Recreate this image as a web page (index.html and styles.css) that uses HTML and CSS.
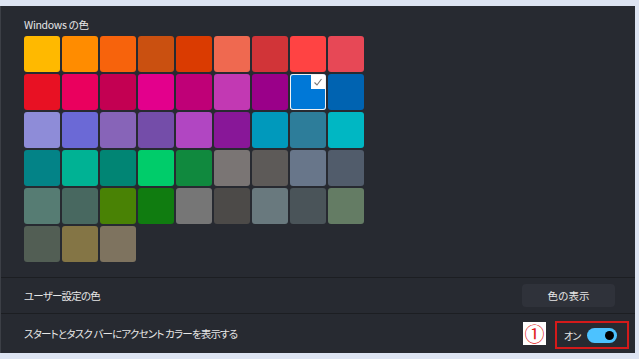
FILE: index.html
```html
<!DOCTYPE html>
<html lang="ja">
<head>
    <meta charset="UTF-8">
    <meta name="viewport" content="width=device-width, initial-scale=1.0">
    <title>Windows の色</title>
    <link rel="stylesheet" href="styles.css">
</head>
<body>
    <div class="panel">
        <div class="colors">
            <p class="label">Windows の色</p>
            <div class="grid">
                <span class="tile" style="background:#ffb900"></span>
                <span class="tile" style="background:#ff8c00"></span>
                <span class="tile" style="background:#f7630c"></span>
                <span class="tile" style="background:#ca5010"></span>
                <span class="tile" style="background:#da3b01"></span>
                <span class="tile" style="background:#ef6950"></span>
                <span class="tile" style="background:#d13438"></span>
                <span class="tile" style="background:#ff4343"></span>
                <span class="tile" style="background:#e74856"></span>

                <span class="tile" style="background:#e81123"></span>
                <span class="tile" style="background:#ea005e"></span>
                <span class="tile" style="background:#c30052"></span>
                <span class="tile" style="background:#e3008c"></span>
                <span class="tile" style="background:#bf0077"></span>
                <span class="tile" style="background:#c239b3"></span>
                <span class="tile" style="background:#9a0089"></span>
                <span class="tile selected" style="background:#0078d7">
                    <span class="check">
                        <svg width="10" height="10" viewBox="0 0 10 10"><path d="M1.5 5.5 L4 8 L8.5 2" fill="none" stroke="#777" stroke-width="1.1"/></svg>
                    </span>
                </span>
                <span class="tile" style="background:#0063b1"></span>

                <span class="tile" style="background:#8e8cd8"></span>
                <span class="tile" style="background:#6b69d6"></span>
                <span class="tile" style="background:#8764b8"></span>
                <span class="tile" style="background:#744da9"></span>
                <span class="tile" style="background:#b146c2"></span>
                <span class="tile" style="background:#881798"></span>
                <span class="tile" style="background:#0099bc"></span>
                <span class="tile" style="background:#2d7d9a"></span>
                <span class="tile" style="background:#00b7c3"></span>

                <span class="tile" style="background:#038387"></span>
                <span class="tile" style="background:#00b294"></span>
                <span class="tile" style="background:#018574"></span>
                <span class="tile" style="background:#00cc6a"></span>
                <span class="tile" style="background:#10893e"></span>
                <span class="tile" style="background:#7a7574"></span>
                <span class="tile" style="background:#5d5a58"></span>
                <span class="tile" style="background:#68768a"></span>
                <span class="tile" style="background:#515c6b"></span>

                <span class="tile" style="background:#567c73"></span>
                <span class="tile" style="background:#486860"></span>
                <span class="tile" style="background:#498205"></span>
                <span class="tile" style="background:#107c10"></span>
                <span class="tile" style="background:#767676"></span>
                <span class="tile" style="background:#4c4a48"></span>
                <span class="tile" style="background:#69797e"></span>
                <span class="tile" style="background:#4a5459"></span>
                <span class="tile" style="background:#647c64"></span>

                <span class="tile" style="background:#525e54"></span>
                <span class="tile" style="background:#847545"></span>
                <span class="tile" style="background:#7e735f"></span>
            </div>
        </div>

        <div class="row custom">
            <span>ユーザー設定の色</span>
            <button class="btn">色の表示</button>
        </div>

        <div class="row accent">
            <span>スタートとタスク バーにアクセント カラーを表示する</span>
            <div class="right">
                <span class="num">①</span>
                <div class="mark">
                    <span class="state">オン</span>
                    <span class="toggle"><span class="knob"></span></span>
                </div>
            </div>
        </div>
    </div>
</body>
</html>
```

FILE: styles.css
```css
body {
    margin: 0;
    background: #dde4f2;
    font-family: "Noto Sans CJK JP", "Noto Sans", sans-serif;
    font-feature-settings: "palt";
    color: #e6e6e6;
    font-size: 10.5px;
}
.panel {
    margin-top: 6px;
    width: 634px;
    height: 347px;
    background: #272a31;
    border-left: 1px solid #3c3f46;
    display: flex;
    flex-direction: column;
}
.colors {
    box-sizing: border-box;
    padding: 11px 0 0 23px;
    height: 272px;
    border-bottom: 1px solid #1c1e22;
}
.label {
    margin: 0 0 3px 0;
    line-height: 16px;
    letter-spacing: -0.3px;
}
.grid {
    display: grid;
    grid-template-columns: repeat(9, 36px);
    grid-auto-rows: 36px;
    gap: 2px;
}
.tile {
    border-radius: 3px;
    position: relative;
}
.tile.selected {
    box-shadow: inset 0 0 0 1px #f2f2f2;
}
.check {
    position: absolute;
    top: 1px;
    right: 1px;
    width: 14px;
    height: 14px;
    background: #ffffff;
    display: flex;
    align-items: center;
    justify-content: center;
}
.row {
    display: flex;
    align-items: center;
    justify-content: space-between;
    padding: 0 0 0 23px;
    letter-spacing: -0.8px;
}
.custom {
    height: 35px;
    padding-right: 20px;
    border-bottom: 1px solid #1c1e22;
}
.accent {
    flex: 1;
    padding-right: 6px;
}
.btn {
    width: 93px;
    height: 23px;
    background: #2f323a;
    border: none;
    border-radius: 4px;
    color: #e6e6e6;
    font-family: inherit;
    font-size: 10.5px;
    padding: 0;
}
.right {
    display: flex;
    align-items: center;
    gap: 9px;
}
.num {
    background: #ffffff;
    color: #e02020;
    width: 23px;
    height: 23px;
    font-size: 20px;
    line-height: 23px;
    text-align: center;
    letter-spacing: 0;
}
.mark {
    box-sizing: border-box;
    display: flex;
    align-items: center;
    gap: 8px;
    width: 74px;
    height: 28px;
    border: 2px solid #d41a1a;
    padding: 0 0 0 7px;
    margin-top: 3px;
}
.state {
    white-space: nowrap;
    width: 15px;
    font-size: 10px;
    letter-spacing: -1px;
}
.toggle {
    flex-shrink: 0;
    width: 30px;
    height: 15px;
    border-radius: 8px;
    background: #4cc2ff;
    display: flex;
    align-items: center;
    justify-content: flex-end;
    padding-right: 3px;
    box-sizing: border-box;
}
.knob {
    width: 9px;
    height: 9px;
    border-radius: 50%;
    background: #000000;
}
```
